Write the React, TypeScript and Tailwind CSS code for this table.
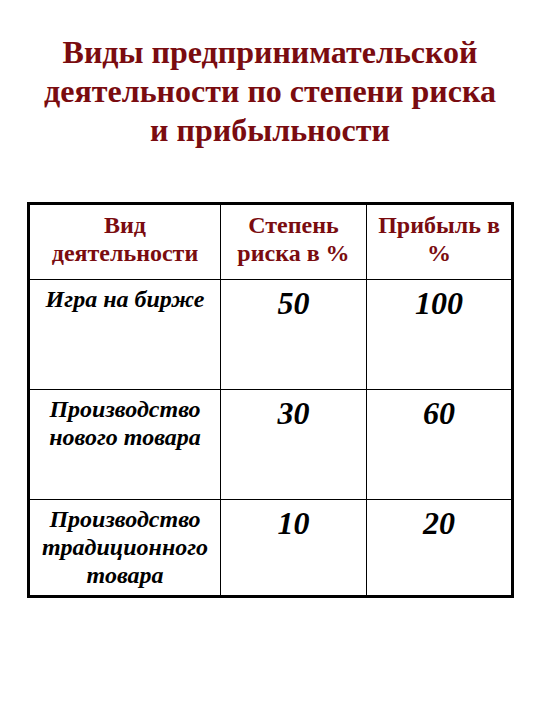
const rows = [
  { label: ['Игра на бирже'], risk: '50', profit: '100' },
  { label: ['Производство', 'нового товара'], risk: '30', profit: '60' },
  { label: ['Производство', 'традиционного', 'товара'], risk: '10', profit: '20' },
]

export default function App() {
  return (
    <div className="w-[540px] h-[720px] bg-white font-['Liberation_Serif','Times_New_Roman',serif]">
      <h1 className="pt-[33px] text-center text-[32px] leading-[39px] font-bold text-[#7a0c10]">
        Виды предпринимательской
        <br />
        деятельности по степени риска
        <br />
        и прибыльности
      </h1>
      <table className="mt-[52px] ml-[27px] w-[487px] border-collapse border-[3px] border-black table-fixed">
        <colgroup>
          <col className="w-[192px]" />
          <col className="w-[146px]" />
          <col />
        </colgroup>
        <thead>
          <tr className="h-[76px]">
            <th className="border-[1.5px] border-black align-top pt-[6px] text-[24px] leading-[28px] font-bold text-[#7a0c10]">
              Вид
              <br />
              деятельности
            </th>
            <th className="border-[1.5px] border-black align-top pt-[6px] text-[24px] leading-[28px] font-bold text-[#7a0c10]">
              Степень
              <br />
              риска в %
            </th>
            <th className="border-[1.5px] border-black align-top pt-[6px] text-[24px] leading-[28px] font-bold text-[#7a0c10]">
              Прибыль в
              <br />%
            </th>
          </tr>
        </thead>
        <tbody>
          {rows.map((r, i) => (
            <tr key={i} className={i === 2 ? 'h-[97px]' : 'h-[110px]'}>
              <td className="border-[1.5px] border-black align-top text-center pt-[5px] text-[24px] leading-[28px] font-bold italic text-black">
                {r.label.map((l, j) => (
                  <div key={j}>{l}</div>
                ))}
              </td>
              <td className="border-[1.5px] border-black align-top text-center pt-[3px] text-[32px] leading-[40px] font-bold italic text-black">
                {r.risk}
              </td>
              <td className="border-[1.5px] border-black align-top text-center pt-[3px] text-[32px] leading-[40px] font-bold italic text-black">
                {r.profit}
              </td>
            </tr>
          ))}
        </tbody>
      </table>
    </div>
  )
}
